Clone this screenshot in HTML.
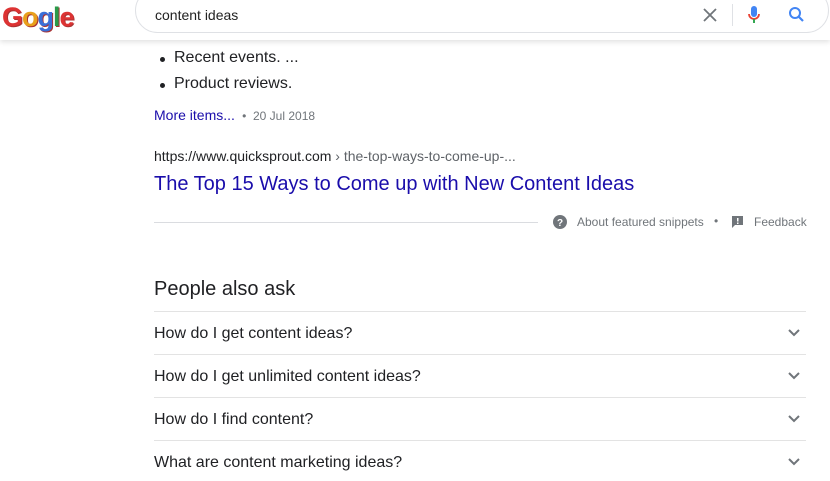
<!DOCTYPE html>
<html><head><meta charset="utf-8"><style>
body{margin:0;width:830px;height:481px;overflow:hidden;background:#fff;font-family:"Liberation Sans",Arial,sans-serif;position:relative}
.hdr{position:absolute;left:0;top:0;width:830px;height:40px;background:#fff;box-shadow:0 2px 5px rgba(0,0,0,.12);z-index:2}
.logo{position:absolute;left:2px;top:2px;font-size:27px;font-weight:bold;letter-spacing:-1px;text-shadow:1px 1px 0 #a33}
.box{position:absolute;left:135px;top:-12px;width:692px;height:43px;border:1px solid #dfe1e5;border-radius:24px;background:#fff}
.q{position:absolute;left:155px;top:7px;font-size:14px;color:#222}
.a{position:absolute;white-space:nowrap}
.li{font-size:16px;color:#202124}
.li:before{content:"";position:absolute;left:-14px;top:8px;width:5px;height:5px;border-radius:50%;background:#202124}
.q2{font-size:16px;color:#202124;left:154px}
.ln{position:absolute;left:154px;width:652px;height:1px;background:#e3e3e3}
.chev{position:absolute;left:787px}
</style></head><body>
<div class="hdr">
 <div class="logo"><span style="color:#d33">G</span><span style="color:#e8a01c">o</span><span style="color:#3a6fd8">g</span><span style="color:#2a9a4a">l</span><span style="color:#d33">e</span></div>
 <div class="box"></div>
 <div class="q">content ideas</div>
 <svg class="a" style="left:702px;top:7px" width="16" height="16" viewBox="0 0 16 16"><path d="M2 2L14 14M14 2L2 14" stroke="#70757a" stroke-width="1.8"/></svg>
 <div class="a" style="left:732px;top:4px;width:1px;height:22px;background:#dfe1e5"></div>
 <svg class="a" style="left:747px;top:5px" width="14" height="20" viewBox="0 0 14 20"><rect x="4" y="1" width="6" height="11" rx="3" fill="#4285f4"/><path d="M2 9a5 5 0 0 0 10 0" stroke="#ea4335" stroke-width="1.8" fill="none"/><path d="M7 14v4" stroke="#34a853" stroke-width="2"/></svg>
 <svg class="a" style="left:788px;top:6px" width="17" height="17" viewBox="0 0 17 17"><circle cx="7" cy="7" r="5" stroke="#4285f4" stroke-width="2" fill="none"/><path d="M10.5 10.5L15 15" stroke="#4285f4" stroke-width="2.2"/></svg>
</div>
<div class="a li" style="left:174px;top:49px">Recent events. ...</div>
<div class="a li" style="left:174px;top:75px">Product reviews.</div>
<div class="a" style="left:154px;top:107px;font-size:14px;color:#1a0dab">More items... <span style="color:#70757a;font-size:12px">&nbsp;•&nbsp; 20 Jul 2018</span></div>
<div class="a" style="left:154px;top:148px;font-size:14px;color:#202124">https://www.quicksprout.com <span style="color:#5f6368">› the-top-ways-to-come-up-...</span></div>
<div class="a" style="left:154px;top:173px;font-size:20px;color:#1a0dab">The Top 15 Ways to Come up with New Content Ideas</div>
<div class="a" style="left:154px;top:222px;width:384px;height:1px;background:#dadce0"></div>
<svg class="a" style="left:553px;top:215px" width="14" height="14" viewBox="0 0 14 14"><circle cx="7" cy="7" r="7" fill="#70757a"/><text x="7" y="11" font-size="10" font-weight="bold" fill="#fff" text-anchor="middle" font-family="Liberation Sans">?</text></svg>
<div class="a" style="left:577px;top:215px;font-size:12px;color:#70757a">About featured snippets</div>
<div class="a" style="left:714px;top:214px;font-size:12px;color:#70757a">•</div>
<svg class="a" style="left:731px;top:215px" width="13" height="13" viewBox="0 0 13 13"><path d="M1 1h11v9H4l-3 3z" fill="#70757a"/><rect x="6" y="3" width="1.5" height="3.5" fill="#fff"/><rect x="6" y="7.5" width="1.5" height="1.5" fill="#fff"/></svg>
<div class="a" style="left:754px;top:215px;font-size:12px;color:#70757a">Feedback</div>
<div class="a" style="left:154px;top:278px;font-size:20px;color:#202124">People also ask</div>
<div class="ln" style="top:311px"></div>
<div class="ln" style="top:354px"></div>
<div class="ln" style="top:397px"></div>
<div class="ln" style="top:440px"></div>
<div class="a q2" style="top:325px">How do I get content ideas?</div>
<div class="a q2" style="top:368px">How do I get unlimited content ideas?</div>
<div class="a q2" style="top:411px">How do I find content?</div>
<div class="a q2" style="top:454px">What are content marketing ideas?</div>
<svg class="chev" style="top:328px" width="14" height="10" viewBox="0 0 14 10"><path d="M2 2l5 5 5-5" stroke="#70757a" stroke-width="2" fill="none"/></svg>
<svg class="chev" style="top:371px" width="14" height="10" viewBox="0 0 14 10"><path d="M2 2l5 5 5-5" stroke="#70757a" stroke-width="2" fill="none"/></svg>
<svg class="chev" style="top:414px" width="14" height="10" viewBox="0 0 14 10"><path d="M2 2l5 5 5-5" stroke="#70757a" stroke-width="2" fill="none"/></svg>
<svg class="chev" style="top:457px" width="14" height="10" viewBox="0 0 14 10"><path d="M2 2l5 5 5-5" stroke="#70757a" stroke-width="2" fill="none"/></svg>
</body></html>
